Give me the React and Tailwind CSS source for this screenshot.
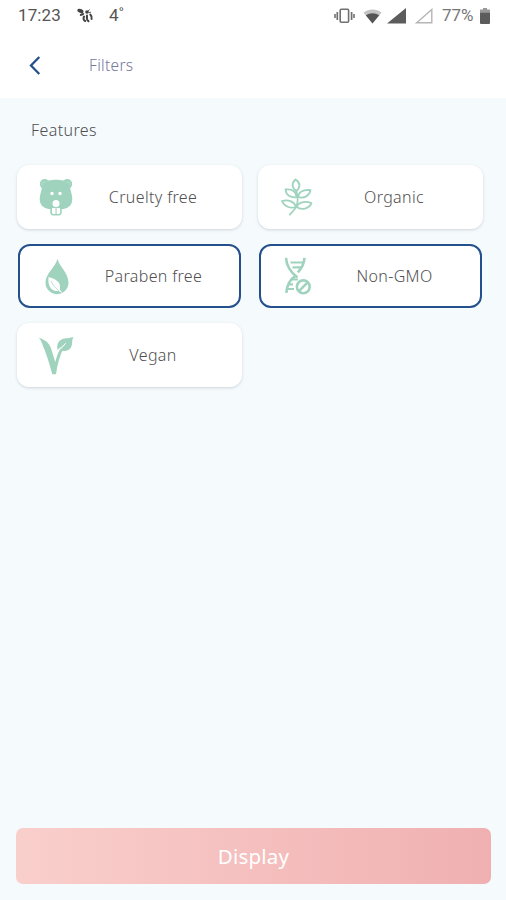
import { useState } from "react";

// -----------------------------------------------------------------------------
// Status bar icons
// -----------------------------------------------------------------------------
function BeeIcon() {
  return (
    <svg width="17" height="16" viewBox="0 0 17 16" fill="#444">
      <ellipse cx="3.4" cy="2.9" rx="3.2" ry="1.9" transform="rotate(18 3.4 2.9)" />
      <ellipse cx="5" cy="6.4" rx="2.4" ry="1.2" transform="rotate(-22 5 6.4)" />
      <circle cx="10" cy="4" r="1.8" />
      <path
        d="M7 8.5c-1 1.8-.3 3.800 1.200 4.500M10 7.500c-.5 2.600 0 4.500 1.500 5.800M13.300 6.500c1.300 1.400 1.700 3 1.300 4.600"
        fill="none"
        stroke="#444"
        strokeWidth="2"
        strokeLinecap="round"
      />
      <path d="M11 3.200 12.500 1.500M11.500 4.600l2.500-.4" stroke="#444" strokeWidth=".9" />
    </svg>
  );
}

function VibrateIcon() {
  return (
    <svg width="21" height="16" viewBox="0 0 21 16" fill="none" stroke="#707070">
      <rect x="6.2" y="1.3" width="8.4" height="13" rx="1" strokeWidth="1.6" />
      <path d="M3.3 4v8M17.6 4v8" strokeWidth="1.7" />
      <path d="M1 6v4M20 6v4" strokeWidth="1.6" />
    </svg>
  );
}

function WifiIcon() {
  return (
    <svg width="19" height="15" viewBox="0 0 19 15">
      <path d="M.5 3.7C5.7-.5 13.3-.5 18.5 3.7L9.500 14.500Z" fill="#c4c4c4" />
      <path d="M2.800 6.300c4-2.800 9.400-2.800 13.400 0L9.500 14.500Z" fill="#555" />
    </svg>
  );
}

function BatteryIcon() {
  return (
    <svg width="10" height="16" viewBox="0 0 10 16">
      <path d="M3 0h4v1.600h3V5H0V1.600h3Z" fill="#999" />
      <path d="M0 4.700h10V15a1 1 0 0 1-1 1H1a1 1 0 0 1-1-1Z" fill="#5c5c5c" />
    </svg>
  );
}

// -----------------------------------------------------------------------------
// Feature icons
// -----------------------------------------------------------------------------
function BearIcon() {
  return (
    <svg width="36" height="40" viewBox="0 0 36 40">
      <g fill="#a0d3be">
        <circle cx="6.700" cy="7" r="4.900" />
        <circle cx="29.300" cy="7" r="4.900" />
        <path d="M18 2.800c-5.500 0-10 .7-12.500 4.200C3.500 10 3.700 13 2.700 16c-1 3.200-1.300 6.500-.5 9.500 1.300 4 5.300 6.200 9.800 6.700h12c4.500-.5 8.500-2.700 9.800-6.700.8-3 .5-6.300-.5-9.500-1-3-.8-6-2.800-9C28 3.500 23.500 2.800 18 2.800Z" />
        <path d="M12.300 29h11.400v6.500a3 3 0 0 1-3 3h-5.400a3 3 0 0 1-3-3Z" />
      </g>
      <path d="M4.300 9a2.800 2.800 0 0 1 4-3.600M31.700 9a2.800 2.800 0 0 0-4-3.600" fill="none" stroke="#b4ddcd" strokeWidth="1" />
      <circle cx="14" cy="16.500" r="1.700" fill="white" />
      <circle cx="22" cy="16.500" r="1.700" fill="white" />
      <circle cx="18" cy="26.500" r="3.500" fill="white" />
      <path d="M14 31h3.500v6h-2a1.500 1.500 0 0 1-1.500-1.500ZM18.600 31h3.500v4.500a1.500 1.500 0 0 1-1.500 1.500h-2Z" fill="white" />
    </svg>
  );
}

function LeavesIcon() {
  return (
    <svg width="32" height="38" viewBox="0 0 32 38" fill="none" stroke="#a0d3be" strokeWidth="1.800" strokeLinejoin="round" strokeLinecap="round">
      <path d="M14.500 1.500c-4 3.500-4 8.200.8 11.500 4.500-3.500 4.200-8.500-.8-11.500Z" />
      <path d="M15.500 19.200C15.300 13.700 11.300 10.800 4.500 11.500c.5 5.700 5 8.500 11 7.700Z" />
      <path d="M17.500 19.200c-.5-5 4.500-8 12-7-.8 5.700-6.500 8.500-12 7Z" />
      <path d="M15 29C13.500 23.800 8 21.300 1 23c2.200 5.400 8.500 8 14 6Z" />
      <path d="M15.700 29c1.500-4.500 8-6.500 14.800-3.800C28.300 30.700 20.500 32.600 15.700 29Z" />
      <path d="M15.300 13c1.700 6 2 11 0 15.500-1.500 3.200-4 5.500-6.500 8" />
    </svg>
  );
}

function DropIcon() {
  return (
    <svg width="24" height="37" viewBox="0 0 24 37">
      <path d="M12.500.7c1.500 7.500 11 14 11 24A11.500 11.500 0 0 1 .5 24.700C.5 15.200 10.500 9.200 12.500.7Z" fill="#a0d3be" />
      <path d="M3.500 19c9 2.500 12.700 6.200 11.300 12.200l2.700 4-3.800-2.300C6.500 34.300 2.500 28 3.500 19Z" fill="white" />
      <path d="M6 23c2 4.200 4.300 7 8 9.700" fill="none" stroke="#a0d3be" strokeWidth=".7" />
    </svg>
  );
}

function DnaIcon() {
  return (
    <svg width="28" height="38" viewBox="0 0 28 38" fill="none" stroke="#a0d3be" strokeWidth="2.600">
      <path d="M2 .8c.5 9 4.500 14.500 11.500 19.700" />
      <path d="M20.500 .8c-.5 6.500-2.700 10.500-6.700 14.500" />
      <path d="M12 18.700C6.500 22 3 28 2.300 35.800" />
      <path d="M6.500 5.500h13M8.500 10.300h9.500" strokeWidth="2.200" />
      <path d="M8 22.500h6M5 27.300h4M3.500 32h6.500" strokeWidth="2.200" />
      <circle cx="19.300" cy="29.800" r="6.400" />
      <path d="m15 34.200 8.600-8.800" />
    </svg>
  );
}

function VeganIcon() {
  return (
    <svg width="36" height="39" viewBox="0 0 36 39">
      <path d="M.8 1.700c6.200 1.800 10.200 5 12.200 10.500L17.300 26c1.500-6.500 3.500-11.500 7-16.500l2 1.200C22 19 19.300 28 18 38.300h-3.700C11 26 8 17 4.700 9.200 3.700 6.200 2.700 3.700.8 1.700Z" fill="#a0d3be" />
      <path d="M35.500 1c-1.800 2.500-.9 6-1.900 9-1.500 4.700-6.100 6-11.600 4.500l6-7.300-8.500 6.500C18.300 7.200 21.500 3.500 26.500 2.500c3-.5 6-.5 9-1.500Z" fill="#a0d3be" />
      <path d="m22 13.500 5.700-6.300" fill="none" stroke="white" strokeWidth="1" />
    </svg>
  );
}

const FEATURES = [
  { key: "cruelty", label: "Cruelty free", icon: <BearIcon /> },
  { key: "organic", label: "Organic", icon: <LeavesIcon /> },
  { key: "paraben", label: "Paraben free", icon: <DropIcon /> },
  { key: "gmo", label: "Non-GMO", icon: <DnaIcon /> },
  { key: "vegan", label: "Vegan", icon: <VeganIcon /> },
];

function FeatureCard({ label, icon, selected, onClick }) {
  return (
    <button
      type="button"
      aria-pressed={selected}
      onClick={onClick}
      className={`flex h-[64px] items-center rounded-[12px] bg-white text-[#505050] ${
        selected
          ? "mx-px border-2 border-[#24508c] pl-[12px] pr-[11px]"
          : "px-[14px] shadow-[0_1px_3px_rgba(70,80,90,0.22)]"
      }`}
    >
      <span className="flex w-[50px] shrink-0 items-center justify-center">{icon}</span>
      <span className="flex-1 pl-[18px] pr-[21px] text-center text-[16px] font-light tracking-[0.35px]">
        {label}
      </span>
    </button>
  );
}

export default function App() {
  const [selected, setSelected] = useState(["paraben", "gmo"]);

  const toggle = (key) =>
    setSelected((prev) =>
      prev.includes(key) ? prev.filter((k) => k !== key) : [...prev, key]
    );

  return (
    <div className="flex h-[900px] w-[506px] flex-col overflow-hidden bg-[#f5fafd] font-['Noto_Sans',sans-serif]">
      {/* Status bar */}
      <div className="flex h-[32px] items-center bg-white pl-[18px] pr-[16px] font-[Roboto,sans-serif] text-[17px] text-[#555]">
        <span className="w-[44px] tracking-[0.1px]">17:23</span>
        <span className="ml-[15px]">
          <BeeIcon />
        </span>
        <span className="ml-[15px]">4˚</span>
        <div className="ml-auto flex items-center">
          <VibrateIcon />
          <span className="ml-[8px]">
            <WifiIcon />
          </span>
          <svg className="ml-[5px]" width="19" height="16" viewBox="0 0 19 16">
            <path d="M0 15.500 19 0v15.500Z" fill="#5c5c5c" />
          </svg>
          <svg className="ml-[9px]" width="18" height="16" viewBox="0 0 18 16">
            <path d="M1.700 14.800 16.800 1.500v13.300Z" fill="none" stroke="#b5b5b5" strokeWidth="1.400" />
          </svg>
          <span className="ml-[9px] w-[32px] whitespace-nowrap text-[17px] text-[#777]">77%</span>
          <span className="ml-[6px]">
            <BatteryIcon />
          </span>
        </div>
      </div>

      {/* Header */}
      <header className="flex h-[66px] items-center bg-white pl-[29px]">
        <button type="button" aria-label="Back">
          <svg width="12" height="19" viewBox="0 0 12 19" fill="none">
            <path d="M10.300 1 2 9.500l8.300 8.500" stroke="#24508c" strokeWidth="2.300" />
          </svg>
        </button>
        <h1 className="ml-[48px] pt-px text-[15.500px] font-light tracking-[0.3px] text-[#7579a0]">Filters</h1>
      </header>

      {/* Feature grid */}
      <main className="flex-1 px-[17px] pt-[20px]">
        <h2 className="pl-[14px] text-[16px] font-light leading-[24px] tracking-[0.4px] text-[#505050]">
          Features
        </h2>
        <div className="mt-[23px] grid w-[466px] grid-cols-2 gap-x-[16px] gap-y-[15px]">
          {FEATURES.map((f) => (
            <FeatureCard
              key={f.key}
              label={f.label}
              icon={f.icon}
              selected={selected.includes(f.key)}
              onClick={() => toggle(f.key)}
            />
          ))}
        </div>
      </main>

      {/* Submit */}
      <footer className="pb-[16px] pl-[16px] pr-[15px]">
        <button
          type="button"
          className="h-[56px] w-full rounded-[7px] bg-linear-to-r from-[#f9cfcc] to-[#f0b0b1] pt-px text-[20.500px] tracking-[0.2px] text-white"
        >
          Display
        </button>
      </footer>
    </div>
  );
}
